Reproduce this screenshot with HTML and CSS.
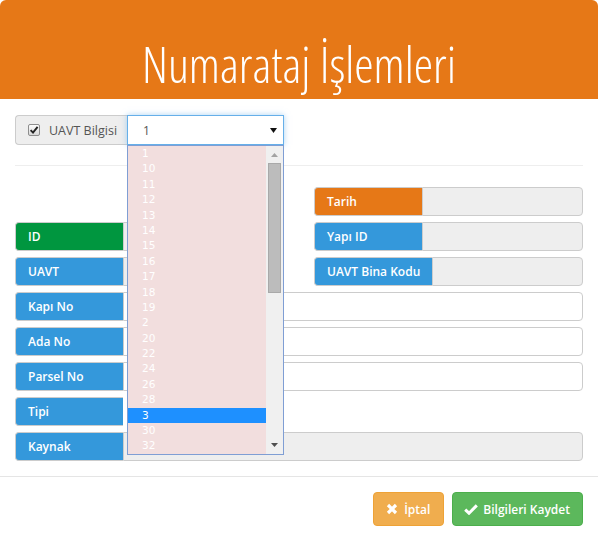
FILE: index.html
```html
<!DOCTYPE html>
<html lang="tr">
<head>
<meta charset="utf-8">
<title>Numarataj İşlemleri</title>
<link rel="stylesheet" href="styles.css">
</head>
<body>
<div class="modal">
  <header class="modal-header">
    <h1 class="title">Numarataj İşlemleri</h1>
  </header>
  <main class="modal-body">
    <div class="top-group">
      <span class="addon">
        <span class="cb"><svg viewBox="0 0 10 10" width="10" height="10"><path d="M1.6 5.2 L4 7.6 L8.6 1.8" fill="none" stroke="#222" stroke-width="1.9"/></svg></span>
        <span>UAVT Bilgisi</span>
      </span>
      <div class="select-wrap">
        <div class="select">
          <span>1</span>
          <svg class="caret" viewBox="0 0 7 5" width="7" height="5"><path d="M0 0 H7 L3.5 5 Z" fill="#111"/></svg>
        </div>
        <div class="listbox">
          <ul class="options">
            <li>1</li><li>10</li><li>11</li><li>12</li><li>13</li><li>14</li><li>15</li><li>16</li><li>17</li><li>18</li><li>19</li><li>2</li><li>20</li><li>22</li><li>24</li><li>26</li><li>28</li><li class="sel">3</li><li>30</li><li>32</li>
          </ul>
          <div class="scrollbar">
            <svg class="arr" viewBox="0 0 7 4" width="7" height="4"><path d="M0 4 H7 L3.5 0 Z" fill="#a3a3a3"/></svg>
            <div class="thumb"></div>
            <div class="sb-fill"></div>
            <svg class="arr" viewBox="0 0 7 4" width="7" height="4"><path d="M0 0 H7 L3.5 4 Z" fill="#505050"/></svg>
          </div>
        </div>
      </div>
    </div>
    <hr class="divider">
    <div class="cols">
      <div class="col">
        <div class="field spacer"></div>
        <div class="field"><span class="lbl green">ID</span><span class="inp ro"></span></div>
        <div class="field"><span class="lbl">UAVT</span><span class="inp ro"></span></div>
      </div>
      <div class="col">
        <div class="field"><span class="lbl orange">Tarih</span><span class="inp ro"></span></div>
        <div class="field"><span class="lbl">Yapı ID</span><span class="inp ro"></span></div>
        <div class="field"><span class="lbl">UAVT Bina Kodu</span><span class="inp ro"></span></div>
      </div>
    </div>
    <div class="field"><span class="lbl">Kapı No</span><span class="inp"></span></div>
    <div class="field"><span class="lbl">Ada No</span><span class="inp"></span></div>
    <div class="field"><span class="lbl">Parsel No</span><span class="inp"></span></div>
    <div class="field"><span class="lbl">Tipi</span></div>
    <div class="field last"><span class="lbl">Kaynak</span><span class="inp ro"></span></div>
  </main>
  <footer class="modal-footer">
    <button class="btn warn"><svg viewBox="0 0 12 12" width="12" height="12"><path d="M2 2 L10 10 M10 2 L2 10" stroke="#fff" stroke-width="3.2" stroke-linecap="butt"/></svg><span>İptal</span></button>
    <button class="btn ok"><svg viewBox="0 0 14 11" width="14" height="11"><path d="M1.2 5.6 L5 9.2 L12.8 1.4" fill="none" stroke="#fff" stroke-width="3"/></svg><span>Bilgileri Kaydet</span></button>
  </footer>
</div>
</body>
</html>
```
FILE: styles.css
```css
html, body {
  margin: 0;
  padding: 0;
}
body {
  font-family: "Open Sans", "Liberation Sans", sans-serif;
  font-size: 12px;
  color: #555;
  background: #fff;
}
.modal {
  width: 598px;
  height: 541px;
  display: flex;
  flex-direction: column;
  box-sizing: border-box;
}
.modal-header {
  height: 99px;
  background: #e67817;
  border-radius: 6px 6px 0 0;
  display: flex;
  justify-content: center;
  overflow: hidden;
}
.title {
  margin: 0;
  padding-top: 40px;
  font-family: "Open Sans", sans-serif;
  font-weight: 300;
  font-stretch: 75%;
  font-size: 49px;
  line-height: 48px;
  color: #fff;
  white-space: nowrap;
}
.modal-body {
  flex: 1;
  padding: 16px 15px 15px;
}
.top-group {
  display: flex;
  height: 30px;
  width: 269px;
}
.addon {
  box-sizing: border-box;
  width: 112px;
  height: 30px;
  display: flex;
  align-items: center;
  gap: 9px;
  padding-left: 12px;
  background: #eee;
  border: 1px solid #ccc;
  border-right: 0;
  border-radius: 4px 0 0 4px;
  font-size: 12.5px;
  color: #555;
}
.cb {
  box-sizing: border-box;
  width: 12px;
  height: 12px;
  border: 1px solid #8d8d8d;
  border-radius: 2px;
  background: linear-gradient(#fdfdfd, #d8d8d8);
  display: flex;
  align-items: center;
  justify-content: center;
}
.cb svg {
  display: block;
}
.select-wrap {
  position: relative;
  width: 157px;
  height: 30px;
}
.select {
  box-sizing: border-box;
  height: 30px;
  border: 1px solid #66afe9;
  box-shadow: 0 0 6px rgba(102, 175, 233, 0.55);
  background: #fff;
  display: flex;
  align-items: center;
  justify-content: space-between;
  padding: 0 6px 0 15px;
  color: #555;
  font-size: 12px;
}
.caret {
  display: block;
}
.listbox {
  position: absolute;
  z-index: 10;
  top: 30px;
  left: 0;
  box-sizing: border-box;
  width: 157px;
  height: 310px;
  border: 1px solid #7f9ed4;
  display: flex;
  background: #f0f0f0;
}
.options {
  list-style: none;
  margin: 0;
  padding: 0;
  flex: 1;
  background: #f2dede;
}
.options li {
  height: 15.4px;
  line-height: 15.4px;
  padding-left: 14px;
  color: #fff;
  font-family: "DejaVu Sans", sans-serif;
  font-size: 10.5px;
}
.options li.sel {
  background: #1e90ff;
}
.scrollbar {
  width: 17px;
  background: #f0f0f0;
  display: flex;
  flex-direction: column;
  align-items: center;
}
.scrollbar .arr {
  display: block;
  margin: 7px 0 6px;
}
.scrollbar .arr:last-child {
  margin: 6px 0 7px;
}
.thumb {
  box-sizing: border-box;
  width: 13px;
  height: 130px;
  background: #bcbcbc;
  border: 1px solid #a9a9a9;
}
.sb-fill {
  flex: 1;
}
.divider {
  margin: 20px 0 21px;
  border: 0;
  border-top: 1px solid #eee;
  height: 0;
}
.cols {
  display: grid;
  grid-template-columns: 1fr 1fr;
  column-gap: 30px;
}
.field {
  display: flex;
  height: 29px;
  margin-bottom: 6px;
}
.field.last {
  margin-bottom: 0;
}
.lbl {
  box-sizing: border-box;
  min-width: 108px;
  height: 29px;
  padding: 0 12px;
  display: flex;
  align-items: center;
  background: #3498db;
  border: 1px solid #ccc;
  border-right: 0;
  border-radius: 4px 0 0 4px;
  color: #fff;
  font-weight: 600;
  font-size: 12px;
  white-space: nowrap;
}
.lbl.green {
  background: #00963f;
}
.lbl.orange {
  background: #e67817;
}
.inp {
  flex: 1;
  box-sizing: border-box;
  height: 29px;
  border: 1px solid #ccc;
  border-radius: 0 4px 4px 0;
  background: #fff;
}
.inp.ro {
  background: #eee;
}
.modal-footer {
  border-top: 1px solid #e5e5e5;
  padding: 15px;
  display: flex;
  justify-content: flex-end;
  gap: 8px;
}
.btn {
  box-sizing: border-box;
  height: 34px;
  display: inline-flex;
  align-items: center;
  gap: 6px;
  padding: 0 13px 0 12px;
  border: 1px solid transparent;
  border-radius: 4px;
  color: #fff;
  font-family: "Open Sans", sans-serif;
  font-weight: 600;
  font-size: 12px;
}
.btn svg {
  display: block;
}
.btn.warn {
  background: #f0ad4e;
  border-color: #eea236;
}
.btn.ok {
  background: #5cb85c;
  border-color: #4cae4c;
  gap: 5px;
  padding: 0 12px 0 11px;
}
```
